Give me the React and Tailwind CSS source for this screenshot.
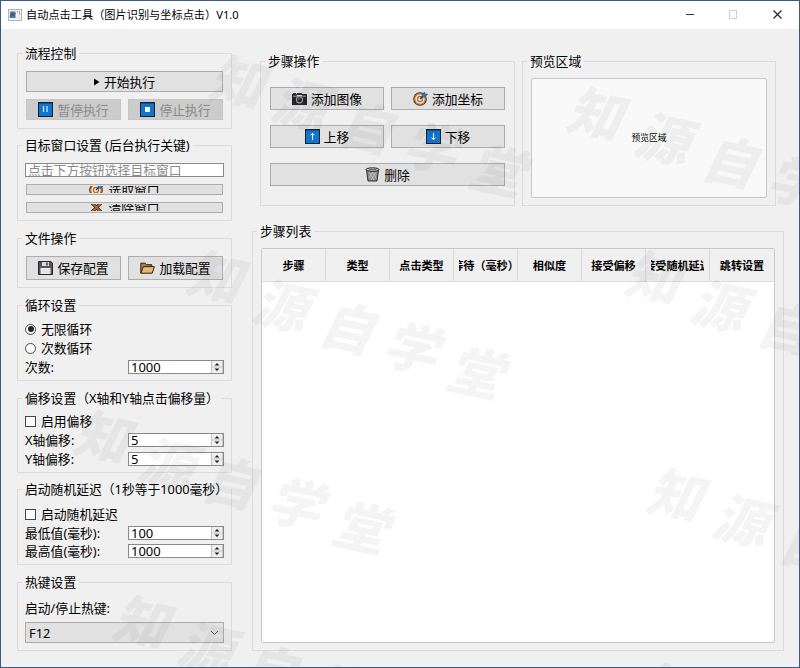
import { useState } from "react";
import clsx from "clsx";

const COLUMNS = ["步骤", "类型", "点击类型", "等待（毫秒）", "相似度", "接受偏移", "接受随机延迟", "跳转设置"];

// Free-floating watermark characters: [char, center x, center y]
const WATERMARK = [
  ["知", 242, 82], ["源", 305, 104], ["自", 371, 128], ["学", 436, 148], ["堂", 502, 171],
  ["知", 600, 114], ["源", 668, 139], ["自", 735, 162], ["学", 800, 182],
  ["知", 220, 277], ["源", 286, 306], ["自", 352, 328], ["学", 416, 348], ["堂", 480, 373],
  ["知", 658, 278], ["源", 724, 306], ["自", 790, 328],
  ["知", 107, 437], ["源", 172, 464], ["自", 235, 483], ["学", 300, 504], ["堂", 365, 528],
  ["知", 680, 495], ["源", 746, 521], ["自", 812, 545],
  ["知", 146, 622], ["源", 211, 648], ["自", 275, 671], ["学", 342, 690], ["知", 674, 690],
];

function PlayIcon() {
  return (
    <svg width="6" height="8" viewBox="0 0 6 8" className="shrink-0">
      <path d="M0 .5 5.5 4 0 7.5Z" fill="#000" />
    </svg>
  );
}

function TileIcon({ children }) {
  return (
    <svg width="15" height="15" viewBox="0 0 15 15" className="shrink-0">
      <rect width="15" height="15" fill="#14202c" />
      <rect x="1" y="1.4" width="13" height="12.6" fill="#0f76cf" />
      {children}
    </svg>
  );
}

function PauseIcon() {
  return (
    <TileIcon>
      <path d="M5.5 4v6M9 4v6" stroke="#dcecfa" strokeWidth="1.2" />
    </TileIcon>
  );
}

function StopIcon() {
  return (
    <TileIcon>
      <rect x="5" y="5" width="5" height="5" fill="#fff" />
    </TileIcon>
  );
}

function UpIcon() {
  return (
    <TileIcon>
      <path d="M7.5 11V4.5M5.5 6.3l2-2 2 2" stroke="#fff" strokeWidth="1" fill="none" />
    </TileIcon>
  );
}

function DownIcon() {
  return (
    <TileIcon>
      <path d="M7.5 4v6.5M5.5 8.7l2 2 2-2" stroke="#fff" strokeWidth="1" fill="none" />
    </TileIcon>
  );
}

function CameraIcon() {
  return (
    <svg width="15" height="12" viewBox="0 0 15 12" className="shrink-0">
      <path d="M0 1h15v11H0Z" fill="#26222c" />
      <path d="M1 0h3v1H1ZM5 0h5v1H5Z" fill="#3c3844" />
      <path d="M1 3.2h3M11 3.2h3" stroke="#aaa6b0" strokeWidth="1" />
      <path d="M5 2h5l1 1.5H4Z" fill="#dcdcdc" />
      <circle cx="7.5" cy="6.8" r="3.6" fill="#a9a8ab" />
      <circle cx="7.5" cy="6.8" r="2.5" fill="#29262e" />
      <circle cx="6.9" cy="6.2" r="0.8" fill="#8a8c96" />
    </svg>
  );
}

function TargetIcon() {
  return (
    <svg width="15" height="15" viewBox="0 0 15 15" className="shrink-0">
      <circle cx="7" cy="8" r="6.8" fill="#3a2a20" />
      <circle cx="7" cy="8" r="6" fill="#c8793c" />
      <circle cx="7" cy="8" r="4.6" fill="#f5eee6" />
      <circle cx="7" cy="8" r="3.2" fill="#b5652c" />
      <circle cx="7" cy="8" r="1.9" fill="#f5eee6" />
      <path d="M7 8 12 3" stroke="#1b2a3a" strokeWidth="1.2" />
      <path d="M9 4 11.5 1 12 3l2.6.2L12 6.2 9.4 6.2Z" fill="#1987d8" stroke="#1b4060" strokeWidth="0.5" />
    </svg>
  );
}

function TrashIcon() {
  return (
    <svg width="15" height="15" viewBox="0 0 15 15" className="shrink-0">
      <path d="M1.5 3h12L12 14H3Z" fill="#8e8e8e" stroke="#2c2c2c" strokeWidth="1" />
      <path d="M4 5l5 8M7 4.5l4 6.5M11 5l-5 8M8 4.5 4 11" stroke="#d0d0d0" strokeWidth="0.7" />
      <ellipse cx="7.5" cy="2.6" rx="6.6" ry="1.8" fill="#b8b8b8" stroke="#2c2c2c" strokeWidth="1" />
      <path d="M4 2.6h7" stroke="#555" strokeWidth="0.8" />
    </svg>
  );
}

function SaveIcon() {
  return (
    <svg width="15" height="14" viewBox="0 0 15 14" className="shrink-0">
      <path d="M.5.5h12.2L14.5 2v11.5H.5Z" fill="#55555b" stroke="#26262a" />
      <rect x="4" y="1" width="7" height="4" fill="#d9d9dc" />
      <rect x="8.2" y="1.5" width="1.5" height="3" fill="#3b3b41" />
      <rect x="2.5" y="7" width="10" height="6" fill="#efefef" />
      <path d="M3 9h9M3 11h9" stroke="#c8c8c8" strokeWidth="0.6" />
    </svg>
  );
}

function FolderIcon() {
  return (
    <svg width="15" height="12" viewBox="0 0 15 12" className="shrink-0">
      <path d="M.8 11.2V1.2h4.4l1.2 1.5h5.4v2" fill="#b9803f" stroke="#2f2215" strokeWidth="1" />
      <path d="M.8 11.2 3.4 4.6h11l-2.2 6.6Z" fill="#e6b878" stroke="#2f2215" strokeWidth="1" />
    </svg>
  );
}

function CrossIcon() {
  return (
    <svg width="15" height="15" viewBox="0 0 15 15" className="shrink-0">
      <path d="M3 3 12 12M12 3 3 12" stroke="#4a2c1a" strokeWidth="3.4" />
      <path d="M3 3 12 12M12 3 3 12" stroke="#a8683c" strokeWidth="1.8" />
    </svg>
  );
}

function AppIcon() {
  return (
    <svg width="14" height="12" viewBox="0 0 14 12" className="shrink-0">
      <rect x="0.5" y="0.5" width="13" height="11" fill="#f0f0f0" stroke="#b4b4b4" />
      <rect x="2" y="2.5" width="5.5" height="6.5" fill="#4a78a8" />
      <path d="M2 8l2-4 1.5 3L7 4" stroke="#2f4f76" fill="none" />
      <path d="M9 3h1M11 3h1M11 5h1" stroke="#666" />
    </svg>
  );
}

function GroupBox({ title, className, children }) {
  return (
    <section className={clsx("flex shrink-0 flex-col border border-[#dcdcdc] px-2", className)}>
      <h2 className="-mt-[10px] mb-px -ml-[4px] h-[18px] w-fit shrink-0 bg-[#f0f0f0] px-[3px] leading-[18px] whitespace-nowrap">
        {title}
      </h2>
      {children}
    </section>
  );
}

function Button({ icon, disabled, className, children }) {
  return (
    <button
      disabled={disabled}
      className={clsx(
        "flex items-center justify-center gap-1 border leading-[16px] whitespace-nowrap",
        disabled ? "border-[#c6c6c6] bg-[#cccccc] text-[#8a8a8a]" : "border-[#adadad] bg-[#e1e1e1]",
        className
      )}
    >
      {icon}
      <span>{children}</span>
    </button>
  );
}

function SlimButton({ icon, children }) {
  return (
    <button className="mt-[7px] flex h-[11px] items-center justify-center border border-[#adadad] bg-[#e1e1e1]">
      <span className="flex h-[7px] items-center gap-1 overflow-hidden leading-[16px] whitespace-nowrap">
        {icon}
        <span>{children}</span>
      </span>
    </button>
  );
}

function SpinBox({ value }) {
  return (
    <div className="-mr-px flex h-[14px] w-24 justify-between border border-[#8a8a8a] bg-white">
      <span className="pl-[2px] text-[13px] leading-[12px]">{value}</span>
      <svg width="12" height="12" viewBox="0 0 12 12" className="shrink-0">
        <rect x="0.5" y="0" width="11" height="12" fill="#f0f0f0" />
        <path d="M.5 0v12M11.5 0v12M0 6h12" stroke="#c4c4c4" />
        <path d="M3.5 4.5 6 2l2.5 2.5ZM3.5 7.5 6 10l2.5-2.5Z" fill="#222" />
      </svg>
    </div>
  );
}

function SpinRow({ label, value }) {
  return (
    <div className="flex h-[18px] items-center justify-between">
      <span className="-ml-px whitespace-nowrap">{label}</span>
      <SpinBox value={value} />
    </div>
  );
}

function Radio({ checked, onSelect, children }) {
  return (
    <div onClick={onSelect} className="-ml-px flex h-[18px] items-center gap-[5px]">
      <span className="flex size-[11px] items-center justify-center rounded-full border border-[#444] bg-white">
        {checked && <span className="size-[6px] rounded-full bg-[#222]" />}
      </span>
      <span>{children}</span>
    </div>
  );
}

function CheckBox({ children }) {
  return (
    <div className="-ml-px flex h-[18px] items-center gap-[5px]">
      <span className="size-[11px] border border-[#444] bg-white" />
      <span>{children}</span>
    </div>
  );
}

function TitleBar() {
  return (
    <header className="flex h-7 shrink-0 items-center bg-white pl-[7px]">
      <AppIcon />
      <h1 className="ml-[4px] text-[11.2px] whitespace-nowrap">自动点击工具（图片识别与坐标点击）V1.0</h1>
      <svg width="98" height="10" viewBox="0 0 98 10" className="mr-4 ml-auto" fill="none">
        <path d="M1 4.5h8" stroke="#333" />
        <rect x="44.5" y="0.5" width="7" height="8" stroke="#cfcfcf" />
        <path d="M88.5 .5l8 8M96.5 .5l-8 8" stroke="#222" strokeWidth="1.1" />
      </svg>
    </header>
  );
}

function App() {
  const [infinite, setInfinite] = useState(true);

  return (
    <div className="relative flex h-[668px] w-[800px] flex-col overflow-hidden border border-[#3a5a82] bg-[#f0f0f0] font-['Noto_Sans','Noto_Sans_CJK_SC',sans-serif] text-[12.8px] leading-[18px] text-black">
      <TitleBar />
      <div className="flex pl-4">
        <aside className="flex w-[215px] shrink-0 flex-col pt-6">
          <GroupBox title="流程控制" className="h-[76px]">
            <Button icon={<PlayIcon />} className="mt-2 h-[21px]">开始执行</Button>
            <div className="mt-[7px] grid grid-cols-2 gap-[7px]">
              <Button icon={<PauseIcon />} disabled className="h-[21px]">暂停执行</Button>
              <Button icon={<StopIcon />} disabled className="h-[21px]">停止执行</Button>
            </div>
          </GroupBox>

          <GroupBox title="目标窗口设置 (后台执行关键)" className="mt-4 h-[76px]">
            <div className="-mx-px mt-2 h-[14px] border border-[#8a8a8a] bg-white pl-[2px] leading-[13px] text-[#8a8a8a]">
              点击下方按钮选择目标窗口
            </div>
            <SlimButton icon={<TargetIcon />}>选取窗口</SlimButton>
            <SlimButton icon={<CrossIcon />}>清除窗口</SlimButton>
          </GroupBox>

          <GroupBox title="文件操作" className="mt-[17px] h-[50px]">
            <div className="mt-2 grid grid-cols-2 gap-[7px]">
              <Button icon={<SaveIcon />} className="h-6">保存配置</Button>
              <Button icon={<FolderIcon />} className="h-6">加载配置</Button>
            </div>
          </GroupBox>

          <GroupBox title="循环设置" className="mt-[17px] h-[76px]">
            <div className="mt-[5px] flex flex-col gap-px">
              <Radio checked={infinite} onSelect={() => setInfinite(true)}>无限循环</Radio>
              <Radio checked={!infinite} onSelect={() => setInfinite(false)}>次数循环</Radio>
              <SpinRow label="次数:" value="1000" />
            </div>
          </GroupBox>

          <GroupBox title="偏移设置（X轴和Y轴点击偏移量）" className="mt-[17px] h-[75px]">
            <div className="mt-1 flex flex-col gap-px">
              <CheckBox>启用偏移</CheckBox>
              <SpinRow label="X轴偏移:" value="5" />
              <SpinRow label="Y轴偏移:" value="5" />
            </div>
          </GroupBox>

          <GroupBox title="启动随机延迟（1秒等于1000毫秒）" className="mt-4 h-[76px]">
            <div className="mt-[6px] flex flex-col gap-[0.5px]">
              <CheckBox>启动随机延迟</CheckBox>
              <SpinRow label="最低值(毫秒):" value="100" />
              <SpinRow label="最高值(毫秒):" value="1000" />
            </div>
          </GroupBox>

          <GroupBox title="热键设置" className="mt-[17px] h-[69px]">
            <span className="-ml-px mt-[7px]">启动/停止热键:</span>
            <div className="-mx-px mt-[5px] flex h-[21px] items-center justify-between border border-[#adadad] bg-[#e1e1e1] pr-1 pl-[3px]">
              <span>F12</span>
              <svg width="9" height="6" viewBox="0 0 9 6" fill="none">
                <path d="M1 1l3.5 3.5L8 1" stroke="#555" />
              </svg>
            </div>
          </GroupBox>
        </aside>

        <main className="ml-5 flex w-[532px] shrink-0 flex-col pt-8">
          <div className="flex gap-[7px] pl-2">
            <GroupBox title="步骤操作" className="h-[145px] w-[255px]">
              <div className="mt-4 grid grid-cols-2 gap-x-[7px] gap-y-[15px] px-px">
                <Button icon={<CameraIcon />} className="h-[23px]">添加图像</Button>
                <Button icon={<TargetIcon />} className="h-[23px]">添加坐标</Button>
                <Button icon={<UpIcon />} className="h-[23px]">上移</Button>
                <Button icon={<DownIcon />} className="h-[23px]">下移</Button>
                <Button icon={<TrashIcon />} className="col-span-2 h-[23px]">删除</Button>
              </div>
            </GroupBox>
            <GroupBox title="预览区域" className="h-[145px] w-[254px]">
              <div className="mt-[7px] flex h-[120px] items-center justify-center rounded-[2px] border border-[#c8c8c8] bg-[#f9f9f9] text-[8.8px]">
                预览区域
              </div>
            </GroupBox>
          </div>

          <GroupBox title="步骤列表" className="mt-[25px] h-[420px]">
            <div className="mt-[7px] h-[395px] rounded-[2px] border border-[#c8c8c8] bg-white">
              <div className="grid h-[33px] grid-cols-8 border-b border-[#dcdcdc] bg-[#f0f0f0]">
                {COLUMNS.map((name) => (
                  <div key={name} className="flex min-w-0 items-center border-r border-[#d8d8d8] px-[5px] pt-[2px] last:border-r-0">
                    <div className="flex w-full justify-center overflow-hidden text-[11.1px] font-bold">
                      <span className="shrink-0 whitespace-nowrap">{name}</span>
                    </div>
                  </div>
                ))}
              </div>
            </div>
          </GroupBox>
        </main>
      </div>

      <div className="pointer-events-none absolute -inset-px select-none" aria-hidden="true">
        {WATERMARK.map(([char, x, y]) => (
          <span
            key={`${x}-${y}`}
            className="absolute -mt-[30px] -ml-[30px] flex size-[60px] rotate-[12deg] -skew-x-[14deg] items-center justify-center text-[54px] leading-none font-black text-[#1c302a]/[0.055]"
            style={{ left: x, top: y }}
          >
            {char}
          </span>
        ))}
      </div>
    </div>
  );
}

export default App;
